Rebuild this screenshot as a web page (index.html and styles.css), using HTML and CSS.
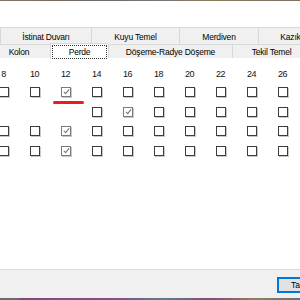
FILE: index.html
```html
<!DOCTYPE html>
<html lang="tr">
<head>
    <meta charset="UTF-8">
    <meta name="viewport" content="width=device-width, initial-scale=1.0">
    <title>Donatı Çapları</title>
    <link rel="stylesheet" href="styles.css">
</head>
<body>
    <div class="masaustu-ust"></div>

    <div class="pencere">
        <div class="sekmeler">
            <div class="sekme-satir arka">
                <div class="sekme" style="width: 91px">İstinat Duvarı</div>
                <div class="sekme" style="width: 88px">Kuyu Temel</div>
                <div class="sekme" style="width: 79px">Merdiven</div>
                <div class="sekme" style="width: 64px">Kazık</div>
            </div>
            <div class="sekme-satir on">
                <div class="sekme" style="width: 63px">Kolon</div>
                <div class="sekme secili" style="width: 58px"><span>Perde</span></div>
                <div class="sekme" style="width: 124px">Döşeme-Radye Döşeme</div>
                <div class="sekme" style="width: 78px">Tekil Temel</div>
            </div>
        </div>

        <div class="sayfa">
            <div class="cap-tablosu">
                <div class="cap">8</div>
                <div class="cap">10</div>
                <div class="cap">12</div>
                <div class="cap">14</div>
                <div class="cap">16</div>
                <div class="cap">18</div>
                <div class="cap">20</div>
                <div class="cap">22</div>
                <div class="cap">24</div>
                <div class="cap">26</div>

                <!-- satir 1 -->
                <div class="hucre"><span class="kutu"></span></div>
                <div class="hucre"><span class="kutu"></span></div>
                <div class="hucre"><span class="kutu isaretli"></span></div>
                <div class="hucre"><span class="kutu"></span></div>
                <div class="hucre"><span class="kutu"></span></div>
                <div class="hucre"><span class="kutu"></span></div>
                <div class="hucre"><span class="kutu"></span></div>
                <div class="hucre"><span class="kutu"></span></div>
                <div class="hucre"><span class="kutu"></span></div>
                <div class="hucre"><span class="kutu"></span></div>

                <!-- satir 2 -->
                <div class="hucre"></div>
                <div class="hucre"></div>
                <div class="hucre"></div>
                <div class="hucre"><span class="kutu"></span></div>
                <div class="hucre"><span class="kutu isaretli"></span></div>
                <div class="hucre"><span class="kutu"></span></div>
                <div class="hucre"><span class="kutu"></span></div>
                <div class="hucre"><span class="kutu"></span></div>
                <div class="hucre"><span class="kutu"></span></div>
                <div class="hucre"><span class="kutu"></span></div>

                <!-- satir 3 -->
                <div class="hucre"><span class="kutu"></span></div>
                <div class="hucre"><span class="kutu"></span></div>
                <div class="hucre"><span class="kutu isaretli"></span></div>
                <div class="hucre"><span class="kutu"></span></div>
                <div class="hucre"><span class="kutu"></span></div>
                <div class="hucre"><span class="kutu"></span></div>
                <div class="hucre"><span class="kutu"></span></div>
                <div class="hucre"><span class="kutu"></span></div>
                <div class="hucre"><span class="kutu"></span></div>
                <div class="hucre"><span class="kutu"></span></div>

                <!-- satir 4 -->
                <div class="hucre"><span class="kutu"></span></div>
                <div class="hucre"><span class="kutu"></span></div>
                <div class="hucre"><span class="kutu isaretli"></span></div>
                <div class="hucre"><span class="kutu"></span></div>
                <div class="hucre"><span class="kutu"></span></div>
                <div class="hucre"><span class="kutu"></span></div>
                <div class="hucre"><span class="kutu"></span></div>
                <div class="hucre"><span class="kutu"></span></div>
                <div class="hucre"><span class="kutu"></span></div>
                <div class="hucre"><span class="kutu"></span></div>
            </div>
            <span class="kirmizi-cizgi"></span>
        </div>

        <div class="alt-bar">
            <button class="tamam">Tamam</button>
        </div>
    </div>

    <div class="masaustu-alt"></div>
</body>
</html>
```

FILE: styles.css
```css
html, body {
    margin: 0;
    padding: 0;
    width: 300px;
    height: 300px;
    overflow: hidden;
    background-color: #ffffff;
    font-family: "Liberation Sans", Arial, sans-serif;
    font-size: 8.5px;
    letter-spacing: -0.2px;
    color: #000000;
}

.masaustu-ust {
    height: 1px;
    background: linear-gradient(to right, #86725e 0%, #6f6a66 30%, #7a7672 55%, #8c7a5c 70%, #7d6f62 100%);
}

.pencere {
    display: flex;
    flex-direction: column;
    height: 297px;
}

.sekmeler {
    margin-top: 26px;
}

.sekme-satir {
    display: flex;
    white-space: nowrap;
}

.sekme {
    flex: none;
    box-sizing: border-box;
    text-align: center;
    background-color: #f0f0f0;
    border-top: 1px solid #d9d9d9;
    border-left: 1px solid #d9d9d9;
}

.arka .sekme {
    height: 17px;
    line-height: 18px;
}

.on {
    margin-left: -13px;
    height: 14px;
    position: relative;
}

.on .sekme {
    height: 14px;
    line-height: 14px;
}

    .on .sekme.secili {
        position: relative;
        z-index: 1;
        height: 16px;
        margin-top: -1px;
        background-color: #ffffff;
        padding: 1px 1px 0;
        line-height: 12px;
    }

        .secili span {
            display: block;
            height: 12px;
            border: 1px dotted #333333;
        }

.sayfa {
    position: relative;
    flex: 1;
    padding-top: 8px;
    background-color: #ffffff;
}

.cap-tablosu {
    display: grid;
    grid-template-columns: repeat(10, 31px);
    grid-template-rows: 16px repeat(4, 19.7px);
    margin-left: -12px;
}

.cap {
    text-align: center;
    line-height: 16px;
    font-size: 9px;
    letter-spacing: -0.4px;
    color: #111111;
}

.hucre {
    display: flex;
    align-items: center;
    justify-content: center;
}

.kutu {
    position: relative;
    display: block;
    width: 10px;
    height: 10px;
    box-sizing: border-box;
    border: 1px solid #3c3c3c;
    background-color: #ffffff;
    box-shadow: 1px 1px 0 #c8c8c8;
}

    .kutu.isaretli {
        border-color: #7a7a7a;
    }

        .kutu.isaretli::after {
            content: "";
            position: absolute;
            left: 3px;
            top: 0px;
            width: 2px;
            height: 5px;
            border-right: 1px solid #707070;
            border-bottom: 1px solid #707070;
            transform: rotate(40deg);
        }

.kirmizi-cizgi {
    position: absolute;
    left: 53px;
    top: 43px;
    width: 31px;
    height: 3px;
    border-radius: 2px;
    background-color: #e81c26;
}

.alt-bar {
    height: 28px;
    background-color: #f0f0f0;
    border-top: 1px solid #dadada;
    display: flex;
    justify-content: flex-end;
    align-items: flex-start;
}

.tamam {
    margin-top: 7px;
    margin-right: -52px;
    width: 75px;
    height: 16px;
    padding: 0 0 0 12px;
    text-align: left;
    font-family: "Liberation Sans", Arial, sans-serif;
    font-size: 8.5px;
    color: #000000;
    background-color: #e1e1e1;
    border: 2px solid #0078d7;
    border-radius: 0;
}

.masaustu-alt {
    height: 2px;
    background: linear-gradient(to right, #6c6c6c 0%, #6c6c6c 6%, #7b4a7c 7%, #83508a 40%, #5f7d86 55%, #7a4e7e 70%, #8c8060 85%, #6f6f6f 100%);
}
```
